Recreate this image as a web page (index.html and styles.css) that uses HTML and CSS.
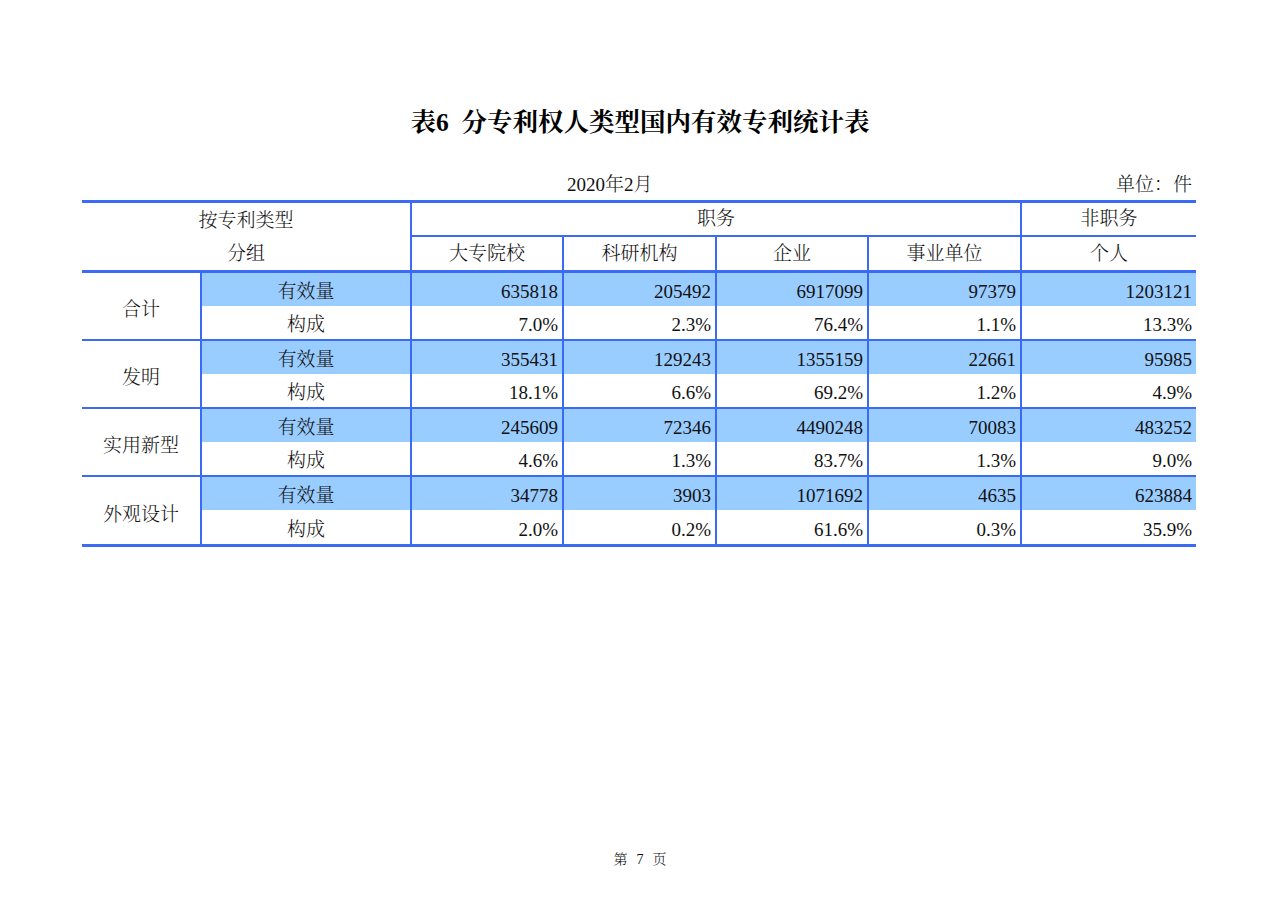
FILE: index.html
```html
<!DOCTYPE html>
<html lang="zh-CN">
<head>
<meta charset="utf-8">
<title>表6 分专利权人类型国内有效专利统计表</title>
<link rel="stylesheet" href="styles.css">
</head>
<body>
<div class="page">
  <h1 class="title">表6&nbsp;&nbsp;分专利权人类型国内有效专利统计表</h1>
  <div class="sheet">
    <div class="caption">
      <span class="date">2020年2月</span>
      <span class="unit">单位：件</span>
    </div>
    <table class="stats">
      <colgroup>
        <col class="c1"><col class="c2"><col class="c3"><col class="c4"><col class="c5"><col class="c6"><col class="c7">
      </colgroup>
      <thead>
        <tr class="hr1">
          <th class="grp-head" colspan="2" rowspan="2">按专利类型<br>分组</th>
          <th class="vl hb" colspan="4">职务</th>
          <th class="vl hb">非职务</th>
        </tr>
        <tr class="hr2">
          <th class="vl">大专院校</th>
          <th class="vl">科研机构</th>
          <th class="vl">企业</th>
          <th class="vl">事业单位</th>
          <th class="vl">个人</th>
        </tr>
      </thead>
      <tbody>
        <tr class="cnt">
          <td class="cat gb" rowspan="2">合计</td>
          <td class="kind vl">有效量</td>
          <td class="num vl">635818</td><td class="num vl">205492</td><td class="num vl">6917099</td><td class="num vl">97379</td><td class="num vl">1203121</td>
        </tr>
        <tr class="shr gb">
          <td class="kind vl">构成</td>
          <td class="num vl">7.0%</td><td class="num vl">2.3%</td><td class="num vl">76.4%</td><td class="num vl">1.1%</td><td class="num vl">13.3%</td>
        </tr>
        <tr class="cnt">
          <td class="cat gb" rowspan="2">发明</td>
          <td class="kind vl">有效量</td>
          <td class="num vl">355431</td><td class="num vl">129243</td><td class="num vl">1355159</td><td class="num vl">22661</td><td class="num vl">95985</td>
        </tr>
        <tr class="shr gb">
          <td class="kind vl">构成</td>
          <td class="num vl">18.1%</td><td class="num vl">6.6%</td><td class="num vl">69.2%</td><td class="num vl">1.2%</td><td class="num vl">4.9%</td>
        </tr>
        <tr class="cnt">
          <td class="cat gb" rowspan="2">实用新型</td>
          <td class="kind vl">有效量</td>
          <td class="num vl">245609</td><td class="num vl">72346</td><td class="num vl">4490248</td><td class="num vl">70083</td><td class="num vl">483252</td>
        </tr>
        <tr class="shr gb">
          <td class="kind vl">构成</td>
          <td class="num vl">4.6%</td><td class="num vl">1.3%</td><td class="num vl">83.7%</td><td class="num vl">1.3%</td><td class="num vl">9.0%</td>
        </tr>
        <tr class="cnt">
          <td class="cat" rowspan="2">外观设计</td>
          <td class="kind vl">有效量</td>
          <td class="num vl">34778</td><td class="num vl">3903</td><td class="num vl">1071692</td><td class="num vl">4635</td><td class="num vl">623884</td>
        </tr>
        <tr class="shr last">
          <td class="kind vl">构成</td>
          <td class="num vl">2.0%</td><td class="num vl">0.2%</td><td class="num vl">61.6%</td><td class="num vl">0.3%</td><td class="num vl">35.9%</td>
        </tr>
      </tbody>
    </table>
  </div>
  <div class="footer"><span>第</span><span class="pno">7</span><span>页</span></div>
</div>
</body>
</html>
```

FILE: styles.css
```css
html, body {
  margin: 0;
  padding: 0;
  background: #ffffff;
}

body {
  font-family: "Liberation Serif", "Noto Serif CJK SC", "Noto Sans CJK SC", serif;
  color: #111111;
}

.page {
  width: 1280px;
  height: 905px;
  box-sizing: border-box;
  padding-top: 108px;
  padding-bottom: 35px;
  display: flex;
  flex-direction: column;
}

.title {
  margin: 0;
  font-size: 25.5px;
  line-height: 30px;
  font-weight: 700;
  text-align: center;
  color: #000000;
}

.sheet {
  margin: 35px 0 0 82px;
  width: 1114px;
}

.caption {
  display: flex;
  justify-content: space-between;
  font-size: 19px;
  line-height: 24px;
  font-weight: 300;
  margin-bottom: 3px;
}

.date {
  margin-left: 485px;
}

.unit {
  padding-right: 4px;
}

.stats {
  width: 1114px;
  table-layout: fixed;
  border-collapse: separate;
  border-spacing: 0;
  border-top: 3px solid #3a6af6;
  border-bottom: 3px solid #3a6af6;
  font-size: 19px;
  line-height: 24px;
  font-weight: 300;
}

.c1 { width: 118px; }
.c2 { width: 210px; }
.c3 { width: 152px; }
.c4 { width: 153px; }
.c5 { width: 152px; }
.c6 { width: 153px; }
.c7 { width: 176px; }

.stats th,
.stats td {
  padding: 0;
  box-sizing: border-box;
  font-weight: 300;
  white-space: nowrap;
}

.stats th {
  text-align: center;
  vertical-align: middle;
}

.vl {
  border-left: 2px solid #3a6af6;
}

.hb {
  border-bottom: 2px solid #3a6af6;
}

.hr1 { height: 34px; }
.hr2 { height: 36px; }

.hr2 th,
.grp-head {
  border-bottom: 3px solid #3a6af6;
}

.grp-head {
  line-height: 33px;
}

.cnt { height: 33px; }
.shr { height: 35px; }
.shr.last { height: 34px; }

.cnt td {
  background: #99ccff;
}

.cnt td.cat {
  background: #ffffff;
}

.stats td {
  vertical-align: middle;
  padding-top: 5px;
}

.gb td,
td.gb {
  border-bottom: 2px solid #3a6af6;
}

.cat {
  text-align: center;
  padding-top: 8px !important;
}

.kind {
  text-align: center;
}

.num {
  text-align: right;
  padding-right: 4px !important;
}

.footer {
  margin-top: auto;
  display: flex;
  justify-content: center;
  gap: 7px;
  font-size: 14px;
  line-height: 20px;
  font-weight: 300;
}

.pno {
  width: 11px;
  text-align: center;
}
```
